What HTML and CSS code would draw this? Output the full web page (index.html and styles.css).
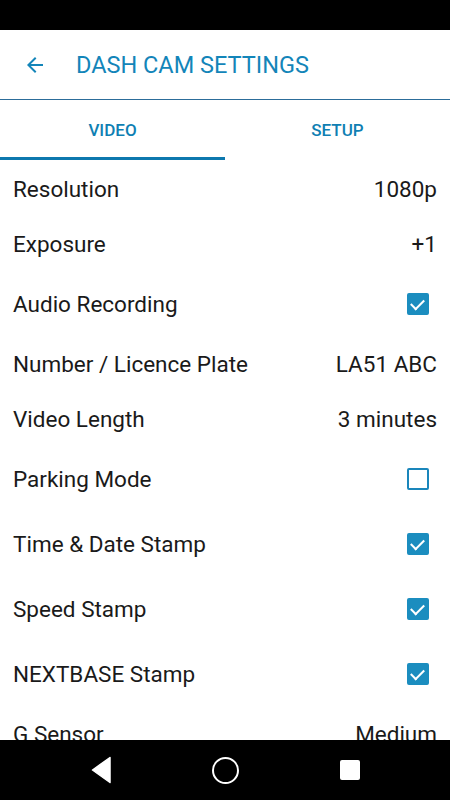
FILE: index.html
```html
<!DOCTYPE html>
<html lang="en">
<head>
    <meta charset="UTF-8">
    <meta name="viewport" content="width=device-width, initial-scale=1.0">
    <title>Dash Cam Settings</title>
    <link rel="stylesheet" href="styles.css">
</head>
<body>
    <div class="status-bar"></div>

    <header class="app-bar">
        <button class="back-button" aria-label="Back">
            <svg viewBox="0 0 24 24" width="24" height="24">
                <path d="M20 11H7.83l5.59-5.59L12 4l-8 8 8 8 1.41-1.41L7.83 13H20v-2z" fill="currentColor"/>
            </svg>
        </button>
        <h1>DASH CAM SETTINGS</h1>
    </header>

    <nav class="tabs">
        <div class="tab active">VIDEO</div>
        <div class="tab">SETUP</div>
    </nav>

    <main class="settings">
        <div class="row"><span>Resolution</span><span>1080p</span></div>
        <div class="row"><span>Exposure</span><span>+1</span></div>
        <div class="row tall"><span>Audio Recording</span><span class="check on"></span></div>
        <div class="row"><span>Number / Licence Plate</span><span>LA51 ABC</span></div>
        <div class="row"><span>Video Length</span><span>3 minutes</span></div>
        <div class="row tall"><span>Parking Mode</span><span class="check"></span></div>
        <div class="row tall"><span>Time &amp; Date Stamp</span><span class="check on"></span></div>
        <div class="row tall"><span>Speed Stamp</span><span class="check on"></span></div>
        <div class="row tall"><span>NEXTBASE Stamp</span><span class="check on"></span></div>
        <div class="row"><span>G Sensor</span><span>Medium</span></div>
    </main>

    <footer class="nav-bar">
        <svg viewBox="0 0 20 28" width="20" height="28">
            <path d="M19 1.5 L1.5 14 L19 26.5 Z" fill="#fff" stroke="#fff" stroke-width="1.5" stroke-linejoin="round"/>
        </svg>
        <span class="home"></span>
        <span class="recents"></span>
    </footer>
</body>
</html>
```

FILE: styles.css
```css
/* Base */
html, body { margin: 0; padding: 0; }
body {
    width: 450px;
    height: 800px;
    overflow: hidden;
    background: #fff;
    font-family: Roboto, "Noto Sans", sans-serif;
    color: #1a1a1a;
    display: flex;
    flex-direction: column;
}

.status-bar { height: 30px; background: #000; flex: none; }

/* Barra superior */
.app-bar {
    height: 69px;
    flex: none;
    display: flex;
    align-items: center;
    border-bottom: 1px solid #2c6d9a;
}

.back-button {
    width: 48px;
    height: 48px;
    margin-left: 11px;
    padding: 0;
    border: none;
    background: none;
    color: #1385b9;
    display: flex;
    align-items: center;
    justify-content: center;
}

.app-bar h1 {
    margin: 0 0 0 17px;
    font-size: 23.5px;
    font-weight: 400;
    color: #1385b9;
}

/* Pestañas */
.tabs {
    height: 60px;
    flex: none;
    display: flex;
}

.tab {
    flex: 1;
    display: flex;
    align-items: center;
    justify-content: center;
    font-size: 17px;
    font-weight: 500;
    color: #0f7fb3;
    border-bottom: 3px solid transparent;
    padding-top: 3px;
}

.tab.active { border-bottom-color: #0d78ae; }

/* Filas */
.settings { flex: 1; overflow: hidden; padding-top: 1px; }

.row {
    height: 55px;
    display: flex;
    align-items: center;
    justify-content: space-between;
    padding: 0 13px;
    font-size: 22.5px;
}

.row.tall { height: 65px; }

.check {
    width: 18px;
    height: 18px;
    margin-right: 8px;
    border: 2px solid #1a86bb;
    border-radius: 2px;
    position: relative;
}

.check.on { background: #1b8dbf; border-color: #1b8dbf; }

.check.on::after {
    content: '';
    position: absolute;
    left: 3px;
    top: 1px;
    width: 11px;
    height: 6px;
    border-left: 2.5px solid #fff;
    border-bottom: 2.5px solid #fff;
    transform: translate(-1px, 3px) rotate(-45deg);
    transform-origin: center;
}

/* Barra de navegación */
.nav-bar {
    height: 60px;
    flex: none;
    background: #000;
    display: flex;
    align-items: center;
    justify-content: center;
    gap: 101px;
}

.home {
    width: 23px;
    height: 23px;
    border: 2.5px solid #fff;
    border-radius: 50%;
}

.recents {
    width: 20px;
    height: 20px;
    background: #fff;
    border-radius: 2px;
}
```
